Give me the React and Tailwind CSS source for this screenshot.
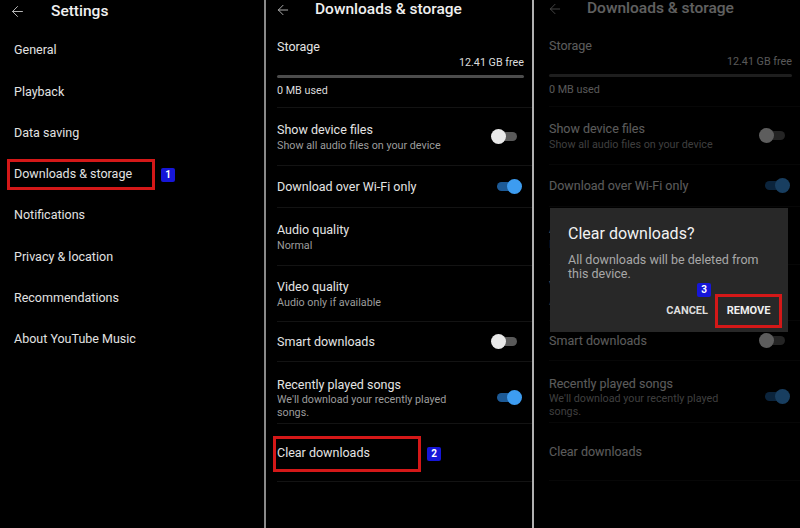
import React from 'react';
import { ArrowLeft } from 'lucide-react';

const font = { fontFamily: 'Roboto, "Liberation Sans", sans-serif' };

const Badge = ({ n, className = '' }) => (
  <span
    className={`flex h-[14px] w-[14px] items-center justify-center rounded-[2px] bg-[#1616d8] text-[10px] font-bold leading-none text-white ${className}`}
  >
    {n}
  </span>
);

// knob sits past the track on whichever side it is on
const Toggle = ({ on }) => (
  <div className="relative h-[15px] w-[31px] shrink-0">
    <div
      className={`absolute left-[6px] top-[3px] h-[9px] w-[20px] rounded-full ${on ? 'bg-[#1d5a96]' : 'bg-[#5a5a5a]'}`}
    />
    <div
      className={`absolute top-0 h-[15px] w-[15px] rounded-full ${on ? 'right-0 bg-[#3d9cf0]' : 'left-0 bg-[#e9e9e9]'}`}
    />
  </div>
);

const settingsItems = [
  'General',
  'Playback',
  'Data saving',
  'Downloads & storage',
  'Notifications',
  'Privacy & location',
  'Recommendations',
  'About YouTube Music',
];

function SettingsPanel() {
  return (
    <div className="flex w-[264px] shrink-0 flex-col">
      <div className="flex h-[30px] items-start">
        <div className="flex h-[23px] items-center">
          <ArrowLeft className="ml-[9px] text-[#b8b8b8]" size={17} strokeWidth={1.4} />
          <span className="ml-[25px] text-[15.5px] font-medium text-[#f0f0f0]">Settings</span>
        </div>
      </div>
      {settingsItems.map((item, i) =>
        i === 3 ? (
          <div key={item} className="flex h-[41.3px] items-center">
            <div className="ml-[7px] flex h-[31px] w-[148px] items-center border-[3px] border-[#d41818] px-[4px] text-[12.5px] text-[#e2e2e2]">
              {item}
            </div>
            <Badge n="1" className="ml-[6px]" />
          </div>
        ) : (
          <div key={item} className="flex h-[41.3px] items-center pl-[14px] text-[12.5px] text-[#e2e2e2]">
            {item}
          </div>
        )
      )}
    </div>
  );
}

function Row({ title, sub, toggle, h, children, extra = '' }) {
  return (
    <div className={`flex items-center border-b border-[#131313] pr-[10px] ${h} ${extra}`}>
      <div className="flex min-w-0 flex-1 flex-col">
        {children || (
          <>
            <div className="text-[12.5px] leading-[16px] text-[#e4e4e4]">{title}</div>
            {sub && <div className="mt-[1px] text-[10.75px] leading-[13px] text-[#9c9c9c]">{sub}</div>}
          </>
        )}
      </div>
      {toggle !== undefined && <Toggle on={toggle} />}
    </div>
  );
}

function DownloadsContent({ highlight, shift = '' }) {
  return (
    <div className={`flex flex-col ${shift}`}>
      <div className="flex h-[20px] items-center">
        <ArrowLeft className="-ml-[2px] text-[#b8b8b8]" size={16} strokeWidth={1.4} />
        <span className="ml-[24px] text-[15.5px] font-medium text-[#f0f0f0]">Downloads &amp; storage</span>
      </div>
      <div className="flex h-[88px] flex-col border-b border-[#131313] pr-[8px] pt-[19px]">
        <div className="text-[12.5px] leading-[16px] text-[#e4e4e4]">Storage</div>
        <div className="mt-[1px] self-end text-[10.75px] leading-[14px] text-[#dcdcdc]">12.41 GB free</div>
        <div className="mt-[5px] h-[3px] w-full rounded-full bg-[#4c4c4c]" />
        <div className="mt-[6px] text-[10.75px] leading-[14px] text-[#dcdcdc]">0 MB used</div>
      </div>
      <Row h="h-[58px]" title="Show device files" sub="Show all audio files on your device" toggle={false} />
      <Row h="h-[42px]" title="Download over Wi-Fi only" toggle={true} />
      <Row h="h-[58px]" title="Audio quality" sub="Normal" />
      <Row h="h-[56px]" title="Video quality" sub="Audio only if available" />
      <Row h="h-[40px]" title="Smart downloads" toggle={false} />
      <Row h="h-[62px]" extra="pt-[10px]" toggle={true}>
        <div className="text-[12.5px] leading-[16px] text-[#e4e4e4]">Recently played songs</div>
        <div className="w-[180px] text-[10.75px] leading-[13px] text-[#9c9c9c]">We'll download your recently played songs.</div>
      </Row>
      <div className="flex h-[58px] items-center border-b border-[#131313] pt-[2px]">
        {highlight ? (
          <>
            <div className="-ml-[4px] flex h-[36px] w-[148px] items-center border-[3px] border-[#d41818] px-[1px] text-[12.5px] text-[#e4e4e4]">
              Clear downloads
            </div>
            <Badge n="2" className="ml-[6px]" />
          </>
        ) : (
          <div className="text-[12.5px] text-[#e4e4e4]">Clear downloads</div>
        )}
      </div>
    </div>
  );
}

export default function App() {
  return (
    <div className="flex h-[528px] w-[800px] overflow-hidden bg-black" style={font}>
      <SettingsPanel />
      <div className="w-[2px] shrink-0 bg-[#8a8a8a]" />
      <div className="w-[266px] shrink-0 pl-[11px]">
        <DownloadsContent highlight />
      </div>
      <div className="w-[2px] shrink-0 bg-[#b0b0b0]" />
      <div className="relative flex-1 pl-[15px]">
        <DownloadsContent shift="-mt-[1px]" />
        <div className="absolute inset-0 bg-black/60" />
        <div className="absolute left-[16px] top-[208px] h-[124px] w-[238px] bg-[#282828] pl-[18px] pt-[16px]">
          <div className="text-[16px] leading-[20px] text-[#f2f2f2]">Clear downloads?</div>
          <div className="mt-[9px] w-[205px] text-[12.5px] leading-[14px] text-[#a8a8a8]">
            All downloads will be deleted from this device.
          </div>
          <Badge n="3" className="absolute left-[147px] top-[75px]" />
          <div className="absolute right-[6px] top-[86px] flex items-center">
            <span className="mr-[7px] text-[11px] font-bold text-[#dedede]">CANCEL</span>
            <div className="flex h-[34px] w-[67px] items-center justify-center border-[3px] border-[#d41818] text-[11px] font-bold text-[#f0f0f0]">
              REMOVE
            </div>
          </div>
        </div>
      </div>
    </div>
  );
}
